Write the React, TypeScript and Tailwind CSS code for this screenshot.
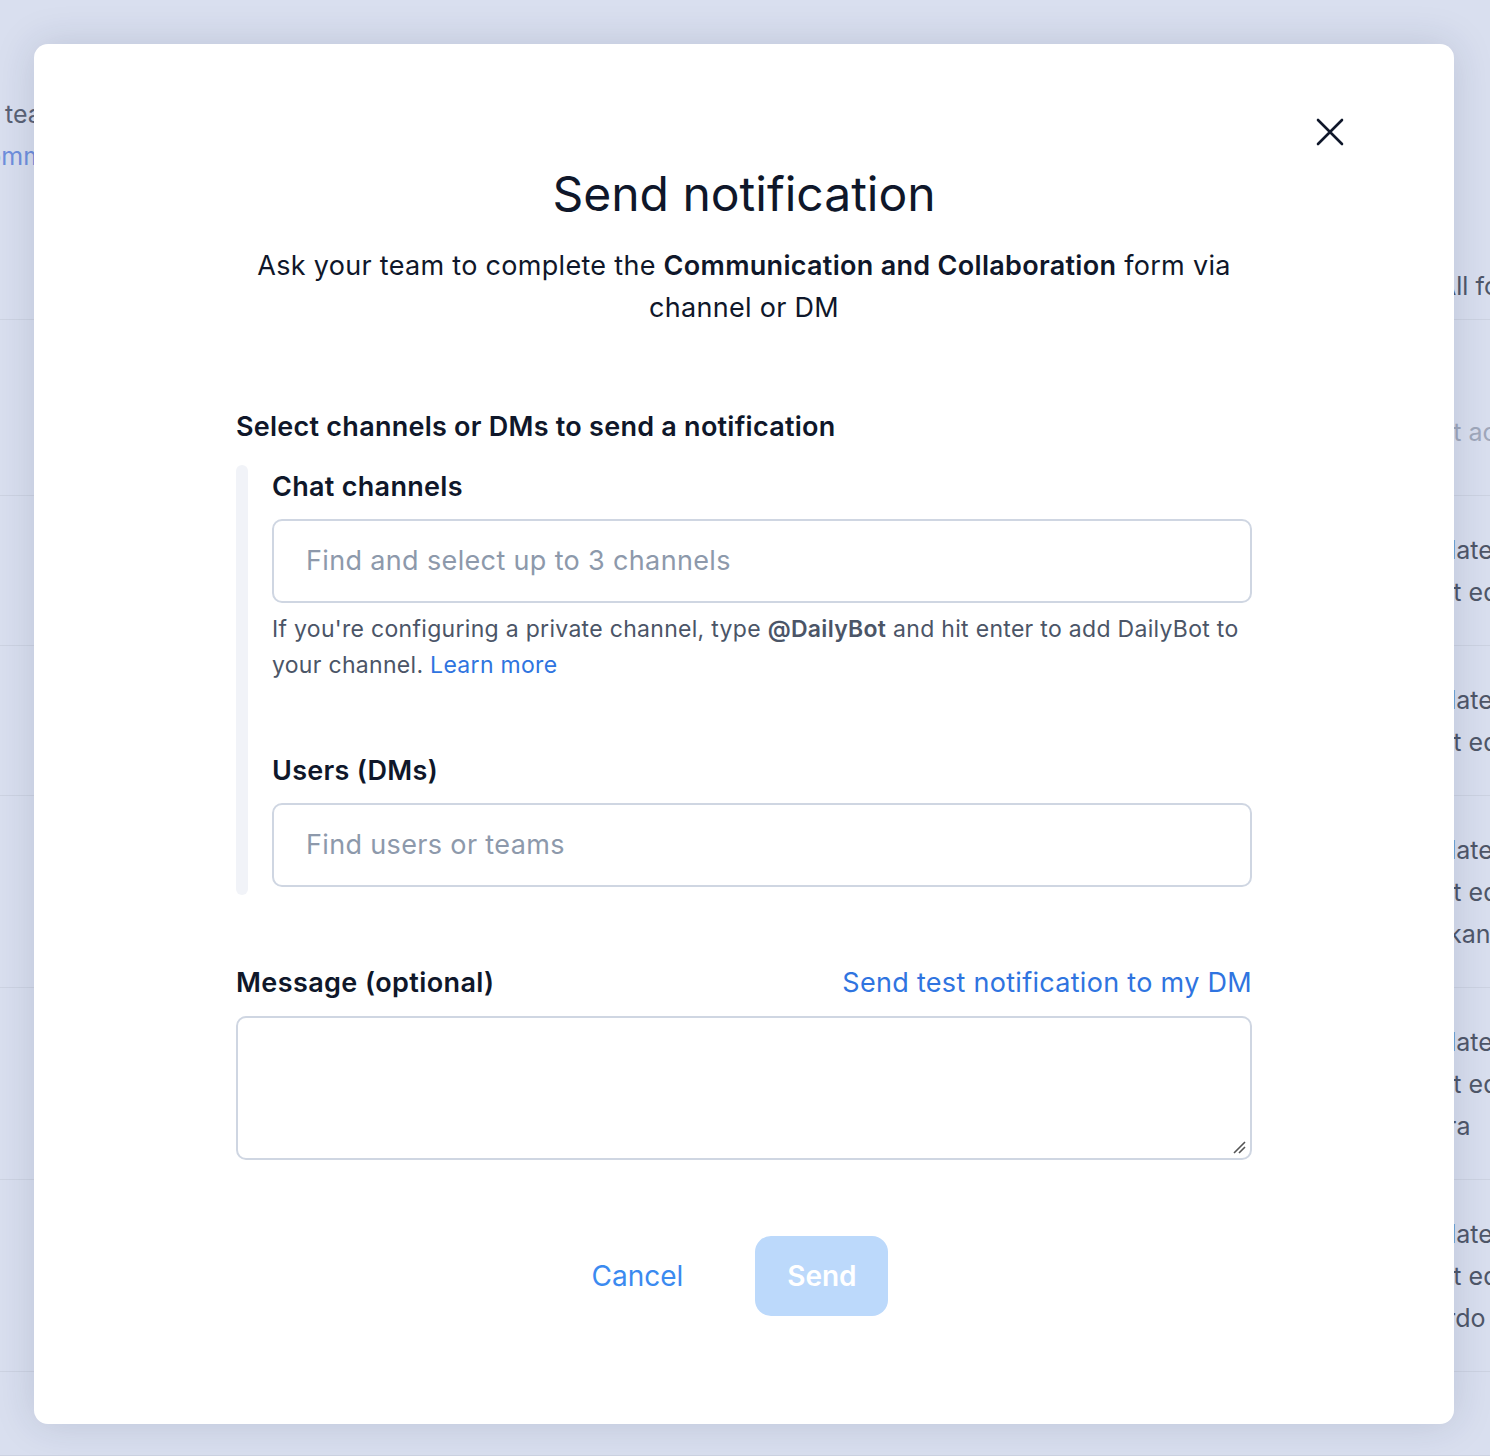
import React from "react";

type Line = { text: string; shift: number };
type Row = { h: number; pt: number; muted?: boolean; lines: Line[] };

const rows: Row[] = [
  { h: 176, pt: 91, muted: true, lines: [{ text: "Last activity", shift: 42 }] },
  {
    h: 150,
    pt: 33,
    lines: [
      { text: "Updated", shift: 47 },
      { text: "Last edited", shift: 42 },
    ],
  },
  {
    h: 150,
    pt: 33,
    lines: [
      { text: "Updated", shift: 47 },
      { text: "Last edited", shift: 42 },
    ],
  },
  {
    h: 192,
    pt: 33,
    lines: [
      { text: "Updated", shift: 47 },
      { text: "Last edited", shift: 42 },
      { text: "kanban", shift: 6 },
    ],
  },
  {
    h: 192,
    pt: 33,
    lines: [
      { text: "Updated", shift: 47 },
      { text: "Last edited", shift: 42 },
      { text: "Sara", shift: 37 },
    ],
  },
  {
    h: 192,
    pt: 33,
    lines: [
      { text: "Updated", shift: 47 },
      { text: "Last edited", shift: 42 },
      { text: "Eduardo", shift: 67 },
    ],
  },
  { h: 84, pt: 0, lines: [] },
];

function Background() {
  return (
    <div className="w-full h-[1456px] bg-[#d9dfef] overflow-hidden text-[25px] leading-[42px]">
      <div className="h-[320px] border-b border-[#cdd3e2] flex">
        <div className="flex-1 pt-[93px]">
          <div className="ml-[5px] text-[#5a6275]">team</div>
          <div className="-ml-[32px] text-[#6f8fdd]">Communication</div>
        </div>
        <div className="w-[36px] pt-[265px] text-[#4f5769]">
          <div className="-ml-[15px] whitespace-nowrap">All forms</div>
        </div>
      </div>
      {rows.map((r, i) => (
        <div key={i} className="flex border-b border-[#cdd3e2]" style={{ height: r.h, paddingTop: r.pt }}>
          <div className="flex-1" />
          <div className={r.muted ? "w-[36px] text-[#a0a8bb]" : "w-[36px] text-[#4f5769]"}>
            {r.lines.map((l, j) => (
              <div key={j} className="whitespace-nowrap" style={{ marginLeft: -l.shift }}>
                {l.text}
              </div>
            ))}
          </div>
        </div>
      ))}
    </div>
  );
}

function Modal() {
  return (
    <div className="absolute left-[34px] top-[44px] w-[1420px] h-[1380px] bg-white rounded-[14px] shadow-[0_0_40px_rgba(30,41,80,0.15)] px-[202px] pt-[120px]">
      <button className="absolute right-[98px] top-[62px] w-[52px] h-[52px] flex items-center justify-center text-[#0f172a]">
        <svg width="28" height="28" viewBox="0 0 28 28" fill="none" stroke="currentColor" strokeWidth="2.6" strokeLinecap="round">
          <path d="M2 2 L26 26 M26 2 L2 26" />
        </svg>
      </button>

      <h2 className="text-center text-[48px] leading-[60px] font-normal text-[#0f172a]">Send notification</h2>
      <p className="mt-[21px] mx-auto max-w-[1000px] text-center text-[27px] leading-[42px] tracking-[0.3px] text-[#0f172a]">
        Ask your team to complete the <span className="font-semibold">Communication and Collaboration</span> form via
        channel or DM
      </p>

      <div className="mt-[80px] text-[27px] leading-[36px] tracking-[0.25px] font-semibold text-[#0f172a]">
        Select channels or DMs to send a notification
      </div>

      <div className="mt-[20px] flex">
        <div className="w-[12px] rounded-[6px] bg-[#f1f3f8]" />
        <div className="flex-1 pl-[24px] pt-[4px] pb-[8px]">
          <div className="text-[27px] leading-[36px] tracking-[0.3px] font-semibold text-[#0f172a]">Chat channels</div>
          <div className="mt-[14px] h-[84px] rounded-[10px] border-2 border-[#cfd6e2] flex items-center px-[32px] text-[27px] tracking-[0.35px] text-[#8d99ab]">
            Find and select up to 3 channels
          </div>
          <p className="mt-[8px] text-[23px] leading-[36px] tracking-[0.3px] text-[#4b5567]">
            If you're configuring a private channel, type <span className="font-semibold">@DailyBot</span> and hit enter
            to add DailyBot to your channel. <span className="text-[#2f74e0]">Learn more</span>
          </p>
          <div className="mt-[70px] text-[27px] leading-[36px] tracking-[0.3px] font-semibold text-[#0f172a]">
            Users (DMs)
          </div>
          <div className="mt-[14px] h-[84px] rounded-[10px] border-2 border-[#cfd6e2] flex items-center px-[32px] text-[27px] tracking-[0.35px] text-[#8d99ab]">
            Find users or teams
          </div>
        </div>
      </div>

      <div className="mt-[70px] flex items-end justify-between">
        <div className="text-[27px] leading-[36px] tracking-[0.4px] font-semibold text-[#0f172a]">Message (optional)</div>
        <div className="text-[27px] leading-[36px] tracking-[0.3px] text-[#2f74e0]">Send test notification to my DM</div>
      </div>
      <div className="mt-[15px] relative h-[144px] rounded-[10px] border-2 border-[#cfd6e2]">
        <svg className="absolute right-[4px] bottom-[4px]" width="14" height="14" viewBox="0 0 14 14" stroke="#555" strokeWidth="1.6">
          <path d="M2 13 L13 2 M7 13 L13 7" />
        </svg>
      </div>

      <div className="mt-[76px] pr-[8px] flex items-center justify-center gap-[72px]">
        <button className="text-[28px] text-[#3b8af0]">Cancel</button>
        <button className="w-[133px] h-[80px] rounded-[16px] bg-[#bcd9fb] text-white text-[28px] font-semibold">
          Send
        </button>
      </div>
    </div>
  );
}

export default function App() {
  return (
    <div className="relative w-full h-[1456px] overflow-hidden font-['Inter',sans-serif]">
      <Background />
      <Modal />
    </div>
  );
}
